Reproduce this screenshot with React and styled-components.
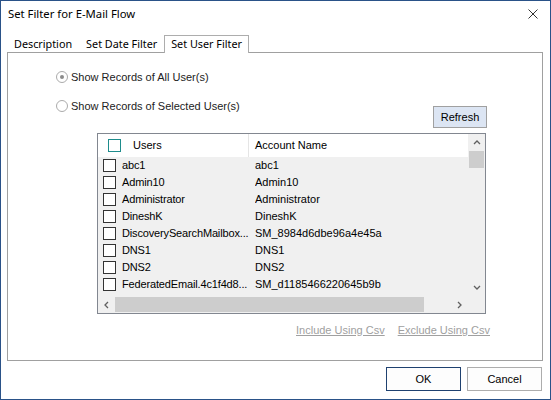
import React from "react";
import styled, { createGlobalStyle } from "styled-components";

const Global = createGlobalStyle`
  html, body { margin: 0; padding: 0; background: #fff; }
  #root { width: 551px; height: 400px; }
`;

const Window = styled.div`
  box-sizing: border-box;
  width: 551px;
  height: 400px;
  border: 1px solid #2a5288;
  background: #fff;
  display: flex;
  flex-direction: column;
  font-family: "Liberation Sans", Arial, sans-serif;
  font-size: 11px;
  color: #000;
`;

const TitleBar = styled.div`
  box-sizing: border-box;
  height: 28px;
  display: flex;
  align-items: center;
  justify-content: space-between;
  padding: 0 12px 3px 7px;
  font-family: "Noto Sans", "Open Sans", sans-serif;
  font-size: 11.3px;
  color: #000;
`;

const TabStrip = styled.div`
  height: 23px;
  display: flex;
  align-items: flex-end;
  padding-left: 6px;
  font-family: "Noto Sans", "Open Sans", sans-serif;
  font-size: 10.8px;
  position: relative;
  z-index: 1;
`;

const Tab = styled.div`
  box-sizing: border-box;
  height: ${(p) => (p.$active ? "18px" : "16px")};
  padding: 0 6px 2px;
  display: flex;
  align-items: center;
  border: ${(p) => (p.$active ? "1px solid #adadad" : "1px solid transparent")};
  border-bottom: none;
  background: #fff;
  margin-bottom: ${(p) => (p.$active ? "-1px" : "0")};
`;

const Panel = styled.div`
  box-sizing: border-box;
  margin: 0 7px 0 6px;
  height: 309px;
  border: 1px solid #a0a0a0;
  display: flex;
  flex-direction: column;
  padding-left: 48px;
`;

const RadioRow = styled.label`
  display: flex;
  align-items: center;
  height: 16px;
  margin-top: ${(p) => p.$top}px;
  color: #222;
  gap: 3px;
`;

const RadioCircle = styled.span`
  box-sizing: border-box;
  width: 12px;
  height: 12px;
  border-radius: 50%;
  border: 1px solid #ababab;
  background: #fff;
  display: flex;
  align-items: center;
  justify-content: center;
  &::after {
    content: "";
    width: 4px;
    height: 4px;
    border-radius: 50%;
    background: ${(p) => (p.$checked ? "#8c8c8c" : "transparent")};
  }
`;

const ListSection = styled.div`
  margin-left: 41px;
  width: 389px;
  display: flex;
  flex-direction: column;
`;

const ToolRow = styled.div`
  display: flex;
  justify-content: flex-end;
  margin-top: -8px;
  margin-right: -1px;
`;

const RefreshButton = styled.button`
  box-sizing: border-box;
  width: 54px;
  height: 22px;
  border: 1px solid #a0a0a0;
  background: #dce5f3;
  font-family: "Liberation Sans", Arial, sans-serif;
  font-size: 11px;
  color: #000;
  padding: 0;
`;

const ListBox = styled.div`
  box-sizing: border-box;
  margin-top: 5px;
  height: 181px;
  border: 1px solid #828790;
  display: grid;
  grid-template-columns: 1fr 17px;
  grid-template-rows: 1fr 17px;
  background: #f0f0f0;
`;

const ListView = styled.div`
  overflow: hidden;
  display: flex;
  flex-direction: column;
`;

const HeaderRow = styled.div`
  height: 23px;
  flex: none;
  display: grid;
  grid-template-columns: 151px 1fr;
  background: #fff;
`;

const HeaderCell = styled.div`
  display: flex;
  align-items: center;
  padding-left: ${(p) => p.$pad}px;
  border-right: ${(p) => (p.$divider ? "1px solid #e5e5e5" : "none")};
  gap: 12px;
  color: #000;
  margin-top: -1px;
`;

const Row = styled.div`
  height: 17px;
  flex: none;
  display: grid;
  grid-template-columns: 157px 1fr;
  align-items: center;
  background: #f0f0f0;
  white-space: nowrap;
`;

const Cell = styled.div`
  display: flex;
  align-items: center;
  padding-left: ${(p) => p.$pad}px;
  gap: 6px;
  overflow: hidden;
  letter-spacing: ${(p) => (p.$tight ? "-0.15px" : "0")};
  margin-top: -1px;
`;

const CheckBox = styled.span`
  box-sizing: border-box;
  width: 13px;
  height: 13px;
  flex: none;
  border: 1px solid ${(p) => (p.$accent ? "#1e8c8c" : "#333")};
  background: #fff;
`;

const VScroll = styled.div`
  background: #f0f0f0;
  display: flex;
  flex-direction: column;
  align-items: center;
`;

const ArrowBox = styled.div`
  width: 17px;
  height: 17px;
  flex: none;
  display: flex;
  align-items: center;
  justify-content: center;
`;

const VThumb = styled.div`
  width: 15px;
  height: 17px;
  background: #cdcdcd;
  flex: none;
`;

const Track = styled.div`
  flex: 1;
`;

const HScroll = styled.div`
  background: #f0f0f0;
  display: flex;
  align-items: center;
`;

const HThumb = styled.div`
  height: 15px;
  width: 309px;
  background: #cdcdcd;
  flex: none;
`;

const Corner = styled.div`
  background: #f0f0f0;
`;

const LinkRow = styled.div`
  display: flex;
  justify-content: flex-end;
  gap: 13px;
  margin-top: 10px;
  margin-right: -4px;
`;

const CsvLink = styled.span`
  color: #a0a0a0;
  text-decoration: underline;
`;

const ButtonRow = styled.div`
  display: flex;
  justify-content: flex-end;
  gap: 6px;
  padding: 6px 8px 0 0;
`;

const DialogButton = styled.button`
  box-sizing: border-box;
  width: 75px;
  height: 24px;
  background: #fdfdfd;
  border: 1px solid ${(p) => (p.$default ? "#1f4170" : "#adadad")};
  font-family: "Liberation Sans", Arial, sans-serif;
  font-size: 11px;
  color: #000;
  padding: 0;
`;

const Chevron = ({ dir }) => {
  const paths = {
    up: "M1 5 L4 2 L7 5",
    down: "M1 2 L4 5 L7 2",
    left: "M5 1 L2 4 L5 7",
    right: "M2 1 L5 4 L2 7",
  };
  return (
    <svg width="8" height="8" viewBox="0 0 8 8">
      <path d={paths[dir]} fill="none" stroke="#606060" strokeWidth="1.3" />
    </svg>
  );
};

const CloseIcon = () => (
  <svg width="10" height="10" viewBox="0 0 10 10">
    <path d="M0.5 0.5 L9.5 9.5 M9.5 0.5 L0.5 9.5" stroke="#333" strokeWidth="1" />
  </svg>
);

const users = [
  ["abc1", "abc1"],
  ["Admin10", "Admin10"],
  ["Administrator", "Administrator"],
  ["DineshK", "DineshK"],
  ["DiscoverySearchMailbox...", "SM_8984d6dbe96a4e45a"],
  ["DNS1", "DNS1"],
  ["DNS2", "DNS2"],
  ["FederatedEmail.4c1f4d8...", "SM_d1185466220645b9b"],
];

export default function App() {
  return (
    <>
      <Global />
      <Window>
        <TitleBar>
          <span>Set Filter for E-Mail Flow</span>
          <CloseIcon />
        </TitleBar>
        <TabStrip>
          <Tab>Description</Tab>
          <Tab>Set Date Filter</Tab>
          <Tab $active>Set User Filter</Tab>
        </TabStrip>
        <Panel>
          <RadioRow $top={16}>
            <RadioCircle $checked />
            Show Records of All User(s)
          </RadioRow>
          <RadioRow $top={13}>
            <RadioCircle />
            Show Records of Selected User(s)
          </RadioRow>
          <ListSection>
            <ToolRow>
              <RefreshButton>Refresh</RefreshButton>
            </ToolRow>
            <ListBox>
              <ListView>
                <HeaderRow>
                  <HeaderCell $pad={10} $divider>
                    <CheckBox $accent />
                    Users
                  </HeaderCell>
                  <HeaderCell $pad={6}>Account Name</HeaderCell>
                </HeaderRow>
                {users.map(([u, a]) => (
                  <Row key={u}>
                    <Cell $pad={5} $tight>
                      <CheckBox />
                      {u}
                    </Cell>
                    <Cell $pad={0}>{a}</Cell>
                  </Row>
                ))}
              </ListView>
              <VScroll>
                <ArrowBox>
                  <Chevron dir="up" />
                </ArrowBox>
                <VThumb />
                <Track />
                <ArrowBox>
                  <Chevron dir="down" />
                </ArrowBox>
              </VScroll>
              <HScroll>
                <ArrowBox>
                  <Chevron dir="left" />
                </ArrowBox>
                <HThumb />
                <Track />
                <ArrowBox>
                  <Chevron dir="right" />
                </ArrowBox>
              </HScroll>
              <Corner />
            </ListBox>
            <LinkRow>
              <CsvLink>Include Using Csv</CsvLink>
              <CsvLink>Exclude Using Csv</CsvLink>
            </LinkRow>
          </ListSection>
        </Panel>
        <ButtonRow>
          <DialogButton $default>OK</DialogButton>
          <DialogButton>Cancel</DialogButton>
        </ButtonRow>
      </Window>
    </>
  );
}
